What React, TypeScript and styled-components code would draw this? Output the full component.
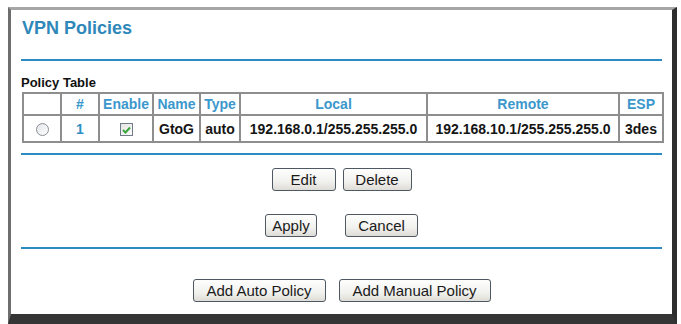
import React from 'react';
import styled, { createGlobalStyle } from 'styled-components';

const GlobalStyle = createGlobalStyle`
  html, body {
    margin: 0;
    padding: 0;
    background: #fff;
  }
  body {
    font-family: "Liberation Sans", Arial, sans-serif;
  }
`;

const Page = styled.div`
  padding: 7px 0 0 8px;
`;

// window frame around the router page
const Frame = styled.div`
  box-sizing: border-box;
  width: 669px;
  height: 317px;
  border-top: 3px solid #a6a6a6;
  border-left: 3px solid #6e6e6e;
  border-right: 5px solid #2e2e2e;
  border-bottom: 10px solid #353535;
  background: #fff;
  padding: 0 10px;
  display: flex;
  flex-direction: column;
`;

const Title = styled.h1`
  margin: 9px 0 0 1px;
  font-size: 18px;
  line-height: 18px;
  font-weight: bold;
  color: #2f88b9;
`;

const Rule = styled.div<{ $top: number }>`
  margin-top: ${(p) => p.$top}px;
  height: 2px;
  background: #2a8cc3;
`;

const SectionLabel = styled.div`
  margin-top: 15px;
  font-size: 13px;
  line-height: 13px;
  font-weight: bold;
  color: #111;
`;

const Table = styled.table`
  margin-top: 3px;
  margin-left: 1px;
  width: 640px;
  table-layout: fixed;
  border-collapse: collapse;
  border: 2px solid #8e8e8e;
`;

const HeadRow = styled.tr`
  height: 22px;
`;

const DataRow = styled.tr`
  height: 27px;
`;

const Th = styled.th`
  border: 2px solid #8e8e8e;
  padding: 0;
  font-size: 14px;
  font-weight: bold;
  color: #3b97cc;
  text-align: center;
  white-space: nowrap;
`;

const Td = styled.td<{ $blue?: boolean }>`
  border: 2px solid #8e8e8e;
  padding: 0;
  font-size: 14px;
  font-weight: bold;
  color: ${(p) => (p.$blue ? '#2f8fc4' : '#151515')};
  text-align: center;
  white-space: nowrap;
`;

const Radio = styled.span`
  display: inline-block;
  vertical-align: middle;
  box-sizing: border-box;
  width: 13px;
  height: 13px;
  border-radius: 50%;
  border: 1px solid #8a8f96;
  background: linear-gradient(135deg, #e2e4e6, #ffffff);
`;

const CheckBox = styled.span`
  display: inline-flex;
  align-items: center;
  justify-content: center;
  vertical-align: middle;
  box-sizing: border-box;
  width: 13px;
  height: 13px;
  border: 1px solid #6f7b86;
  background: linear-gradient(135deg, #e4e4e4, #fbfbfb);
`;

const ButtonRow = styled.div<{ $top: number; $gap: number }>`
  margin-top: ${(p) => p.$top}px;
  display: flex;
  justify-content: center;
  gap: ${(p) => p.$gap}px;
`;

const Button = styled.button<{ $w: number }>`
  box-sizing: border-box;
  width: ${(p) => p.$w}px;
  height: 23px;
  padding: 0;
  border: 1px solid #4d5863;
  border-radius: 3px;
  background: linear-gradient(#fefefe, #f1f1ee 60%, #dedcd6);
  font-family: "Liberation Sans", Arial, sans-serif;
  font-size: 15px;
  color: #1a1a1a;
  cursor: pointer;
`;

const columns = [38, 38, 54, 47, 40, 187, 192, 44];

const App = () => {
  return (
    <>
      <GlobalStyle />
      <Page>
        <Frame>
          <Title>VPN Policies</Title>
          <Rule $top={22} />
          <SectionLabel>Policy Table</SectionLabel>
          <Table>
            <colgroup>
              {columns.map((w, i) => (
                <col key={i} style={{ width: w }} />
              ))}
            </colgroup>
            <tbody>
              <HeadRow>
                <Th>&nbsp;</Th>
                <Th>#</Th>
                <Th>Enable</Th>
                <Th>Name</Th>
                <Th>Type</Th>
                <Th>Local</Th>
                <Th>Remote</Th>
                <Th>ESP</Th>
              </HeadRow>
              <DataRow>
                <Td>
                  <Radio />
                </Td>
                <Td $blue>1</Td>
                <Td>
                  <CheckBox>
                    <svg width="9" height="8" viewBox="0 0 9 8">
                      <path d="M1 4 L3.5 6.5 L8 1.5" fill="none" stroke="#3aa53a" strokeWidth="2" />
                    </svg>
                  </CheckBox>
                </Td>
                <Td>GtoG</Td>
                <Td>auto</Td>
                <Td>192.168.0.1/255.255.255.0</Td>
                <Td>192.168.10.1/255.255.255.0</Td>
                <Td>3des</Td>
              </DataRow>
            </tbody>
          </Table>
          <Rule $top={10} />
          <ButtonRow $top={13} $gap={7}>
            <Button $w={64}>Edit</Button>
            <Button $w={69}>Delete</Button>
          </ButtonRow>
          <ButtonRow $top={23} $gap={28}>
            <Button $w={52}>Apply</Button>
            <Button $w={73}>Cancel</Button>
          </ButtonRow>
          <Rule $top={10} />
          <ButtonRow $top={30} $gap={13}>
            <Button $w={133}>Add Auto Policy</Button>
            <Button $w={152}>Add Manual Policy</Button>
          </ButtonRow>
        </Frame>
      </Page>
    </>
  );
};

export default App;
